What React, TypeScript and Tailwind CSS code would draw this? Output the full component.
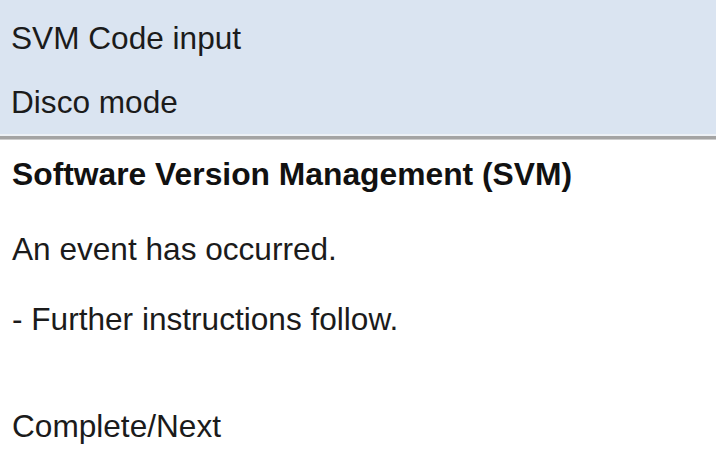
import React from 'react';

export default function App() {
  const menuItems = ['SVM Code input', 'Disco mode'];

  return (
    <div className="w-[716px] h-[451px] overflow-hidden bg-white text-[31.6px] text-[#1b1b1b] font-['Liberation_Sans',Arial,sans-serif]">
      {/* menu band */}
      <div className="bg-[#dae4f1] pt-[6px] pl-[11px]">
        {menuItems.map((item) => (
          <div key={item} className="h-16 leading-[64px]">
            {item}
          </div>
        ))}
      </div>
      <div className="h-[2px] bg-[#edf1f6]" />
      <div className="h-[3px] bg-[#a4a4a4]" />
      <div className="h-px bg-[#cdcdcd]" />

      {/* message */}
      <div className="pl-3 pt-[14px]">
        <h1 className="text-[31.8px] font-bold leading-10 text-[#111]">Software Version Management (SVM)</h1>
        <p className="mt-[35px] leading-10">An event has occurred.</p>
        <p className="mt-[30px] leading-10">- Further instructions follow.</p>
        <p className="mt-[67px] leading-10">Complete/Next</p>
      </div>
    </div>
  );
}
